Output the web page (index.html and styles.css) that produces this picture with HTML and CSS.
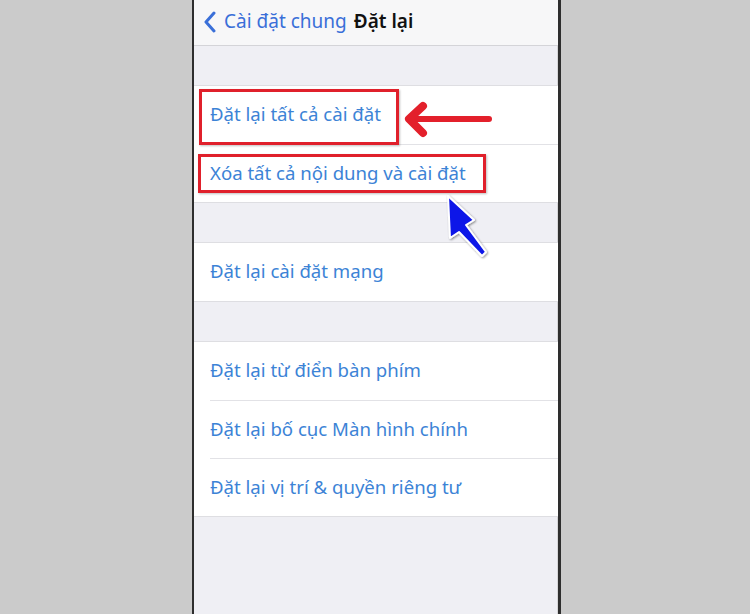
FILE: index.html
```html
<!DOCTYPE html>
<html lang="vi">
<head>
<meta charset="utf-8">
<link rel="stylesheet" href="styles.css">
</head>
<body>
<div class="phone">
  <div class="screen">
    <header class="nav">
      <span class="back">
        <svg class="chev" width="14" height="22" viewBox="0 0 14 22"><path d="M11 2 L3 11 L11 20" fill="none" stroke="#3a6fd8" stroke-width="3" stroke-linecap="round" stroke-linejoin="round"/></svg>
        <span class="back-label">Cài đặt chung</span>
      </span>
      <span class="title">Đặt lại</span>
    </header>
    <section class="group">
      <div class="row">Đặt lại tất cả cài đặt</div>
      <div class="row">Xóa tất cả nội dung và cài đặt</div>
    </section>
    <section class="group">
      <div class="row">Đặt lại cài đặt mạng</div>
    </section>
    <section class="group">
      <div class="row">Đặt lại từ điển bàn phím</div>
      <div class="row">Đặt lại bố cục Màn hình chính</div>
      <div class="row">Đặt lại vị trí &amp; quyền riêng tư</div>
    </section>
  </div>
</div>
<div class="mark mark-1"></div>
<div class="mark mark-2"></div>
<svg class="arrows" width="750" height="614" viewBox="0 0 750 614">
  <defs>
    <filter id="sh" x="-20%" y="-20%" width="140%" height="140%">
      <feDropShadow dx="1" dy="1" stdDeviation="1.2" flood-color="#000" flood-opacity="0.45"/>
    </filter>
  </defs>
  <g fill="none" stroke="#e3202b" stroke-linecap="round" stroke-linejoin="round">
    <path d="M489 119 L412 119" stroke-width="6"/>
    <path d="M423 106 L409 119 L423 133" stroke-width="8"/>
  </g>
  <path filter="url(#sh)" d="M448 196 L474 220 L466 225 L486 252 L482 256 L459 232 L450 238 Z" fill="#0a14e8" stroke="#fff" stroke-width="2" stroke-linejoin="round"/>
</svg>
</body>
</html>
```
FILE: styles.css
```css
html, body {
  margin: 0;
  padding: 0;
}
body {
  background: #cbcbcb;
  width: 750px;
  height: 614px;
  overflow: hidden;
  position: relative;
  font-family: "Noto Sans", "Liberation Sans", sans-serif;
}
.phone {
  margin-left: 192px;
  width: 364px;
  height: 614px;
  border-left: 2px solid #2e2e2e;
  border-right: 3px solid #2e2e2e;
  box-shadow: inset -1px 0 0 #d6d6d8;
  background: #efeff4;
}
.screen {
  display: flex;
  flex-direction: column;
}
.nav {
  height: 42px;
  padding-bottom: 3px;
  background: #f7f7f8;
  border-bottom: 1px solid #d4d4d8;
  display: flex;
  align-items: center;
  padding-left: 9px;
  gap: 7px;
}
.back {
  display: flex;
  align-items: center;
  gap: 7px;
  color: #3a6fd8;
  font-size: 19px;
}
.chev {
  display: block;
  margin-top: 2px;
}
.title {
  color: #111;
  font-size: 19px;
  font-weight: 600;
}
.group {
  background: #fff;
  border-top: 1px solid #dedee2;
  border-bottom: 1px solid #dedee2;
  margin-top: 39px;
}
.row {
  height: 54px;
  padding-bottom: 3px;
  display: flex;
  align-items: center;
  margin-left: 16px;
  color: #3c83d6;
  font-size: 18.6px;
  border-top: 1px solid #e2e2e6;
}
.row:first-child {
  border-top: none;
  height: 55px;
}
.mark {
  position: absolute;
  border: 3px solid #e0202b;
  box-shadow: 1px 1px 2px rgba(0,0,0,0.25);
}
.mark-1 {
  left: 199px;
  top: 89px;
  width: 194px;
  height: 50px;
}
.mark-2 {
  left: 198px;
  top: 154px;
  width: 282px;
  height: 33px;
}
.arrows {
  position: absolute;
  left: 0;
  top: 0;
}
```
